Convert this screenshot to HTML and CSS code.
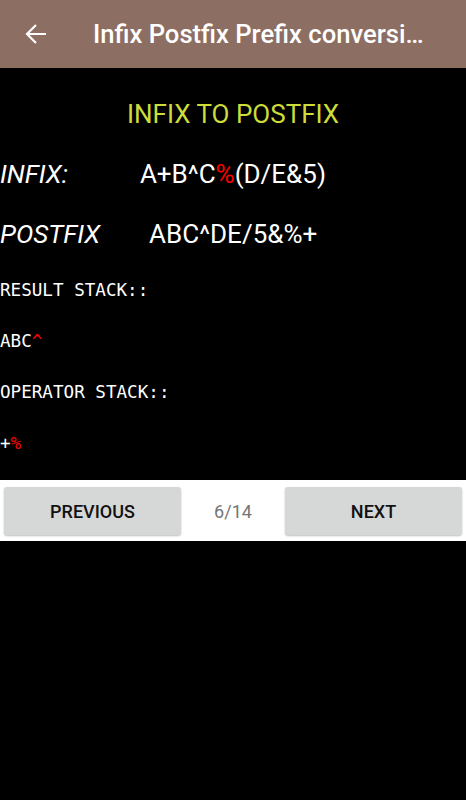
FILE: index.html
```html
<!DOCTYPE html>
<html lang="en">
<head>
  <meta charset="UTF-8">
  <meta name="viewport" content="width=device-width, initial-scale=1.0">
  <title>Infix Postfix Prefix conversion</title>
  <link rel="stylesheet" href="styles.css">
</head>
<body>
  <div class="toolbar">
    <svg class="back" width="22" height="22" viewBox="0 0 22 22">
      <path d="M21 11H2.5M11 2L2 11l9 9" fill="none" stroke="#fff" stroke-width="2.2"/>
    </svg>
    <div class="toolbar-title">Infix Postfix Prefix conversion</div>
  </div>

  <div class="content">
    <div class="heading">INFIX TO POSTFIX</div>

    <div class="expr-row">
      <span class="label">INFIX:</span>
      <span class="value infix-value">A+B^C<span class="hl">%</span>(D/E&amp;5)</span>
    </div>
    <div class="expr-row">
      <span class="label">POSTFIX</span>
      <span class="value postfix-value">ABC^DE/5&amp;%+</span>
    </div>

    <div class="mono">RESULT STACK::</div>
    <div class="mono">ABC<span class="hl">^</span></div>
    <div class="mono">OPERATOR STACK::</div>
    <div class="mono">+<span class="hl">%</span></div>
  </div>

  <div class="nav-bar">
    <button class="nav-btn">PREVIOUS</button>
    <div class="step">6/14</div>
    <button class="nav-btn">NEXT</button>
  </div>
</body>
</html>
```

FILE: styles.css
```css
body {
  margin: 0;
  padding: 0;
  font-family: Roboto, "Noto Sans", sans-serif;
  background-color: #000;
  color: #fff;
  width: 466px;
  height: 800px;
  overflow: hidden;
}

.toolbar {
  display: flex;
  align-items: center;
  height: 68px;
  background-color: #8d6e63;
  box-shadow: 0 1px 3px rgba(0, 0, 0, 0.5);
}

.back {
  margin-left: 25px;
  flex: none;
}

.toolbar-title {
  margin-left: 46px;
  margin-right: 38px;
  font-size: 25.6px;
  font-weight: 500;
  white-space: nowrap;
  overflow: hidden;
  text-overflow: ellipsis;
}

.content {
  padding-top: 31px;
}

.heading {
  text-align: center;
  color: #cddc39;
  font-size: 26px;
  line-height: 30px;
}

.expr-row {
  display: flex;
  font-size: 26px;
  line-height: 32px;
  margin-top: 29px;
}

.expr-row + .expr-row {
  margin-top: 28px;
}

.label {
  font-style: italic;
}

.infix-value {
  margin-left: 72px;
}

.postfix-value {
  margin-left: 49px;
}

.hl {
  color: #f00;
}

.mono {
  font-family: "DejaVu Sans Mono", monospace;
  font-size: 17.6px;
  line-height: 22px;
  margin-top: 29px;
}

.nav-bar {
  display: flex;
  align-items: center;
  margin-top: 26px;
  padding: 7px 4px 6px;
  background-color: #fff;
}

.nav-btn {
  width: 177px;
  height: 48px;
  border: none;
  border-radius: 3px;
  background-color: #d6d7d7;
  box-shadow: 0 1px 2px rgba(0, 0, 0, 0.25);
  font-family: Roboto, sans-serif;
  font-size: 18px;
  font-weight: 500;
  color: #111;
}

.step {
  flex: 1;
  text-align: center;
  font-size: 18px;
  color: #757575;
}
```
